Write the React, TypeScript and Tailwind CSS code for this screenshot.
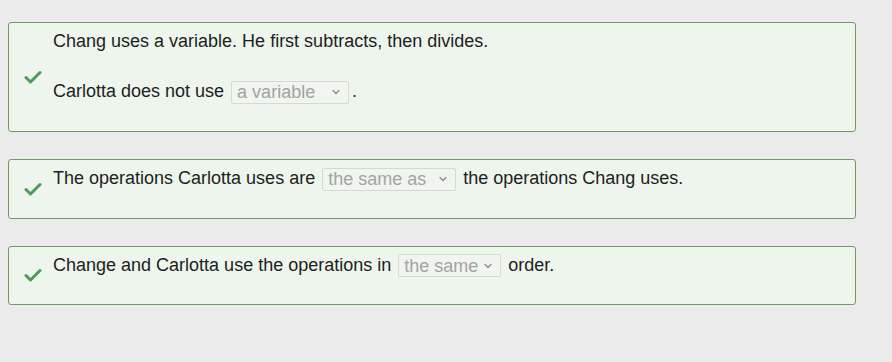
import { ChevronDown } from 'lucide-react'

function Check() {
  return (
    <svg width="18" height="14" viewBox="0 0 18 14" className="shrink-0">
      <path d="M2 7.5 L6.5 12 L16 2.5" fill="none" stroke="#4f9a58" strokeWidth="3" strokeLinecap="round" strokeLinejoin="round" />
    </svg>
  )
}

function Pick({ value, w, mr }: { value: string; w: string; mr: string }) {
  return (
    <span className={`inline-flex items-center justify-between h-[23px] pl-[5px] pr-[6px] ml-[7px] align-middle border border-[#d3dbd0] bg-[#f0f5ef] rounded-[2px] text-[#a3a3a3] ${w} ${mr}`}>
      {value}
      <ChevronDown size={12} strokeWidth={2.5} className="text-[#8a8a8a]" />
    </span>
  )
}

function Card({ children }: { children: React.ReactNode }) {
  return (
    <div className="flex items-center border border-[#6f9a66] bg-[#edf5ec] rounded-[3px] pl-[15px]">
      <Check />
      <div className="ml-[11px] pt-[6px] pb-[27px]">{children}</div>
    </div>
  )
}

export default function App() {
  return (
    <div className="w-[892px] h-[362px] bg-[#ebebeb] pt-[22px] pl-[8px] pr-[36px] flex flex-col gap-[27px] text-[18px] text-[#1e1e1e] font-['Liberation_Sans',Arial,sans-serif]">
      <Card>
        <p className="leading-[24px]">Chang uses a variable. He first subtracts, then divides.</p>
        <p className="leading-[24px] mt-[26px]">
          Carlotta does not use<Pick value="a variable" w="w-[118px]" mr="mr-[3px]" />.
        </p>
      </Card>
      <Card>
        <p className="leading-[24px]">
          The operations Carlotta uses are<Pick value="the same as" w="w-[134px]" mr="mr-[7px]" />the operations Chang uses.
        </p>
      </Card>
      <Card>
        <p className="leading-[24px]">
          Change and Carlotta use the operations in<Pick value="the same" w="w-[103px]" mr="mr-[7px]" />order.
        </p>
      </Card>
    </div>
  )
}
